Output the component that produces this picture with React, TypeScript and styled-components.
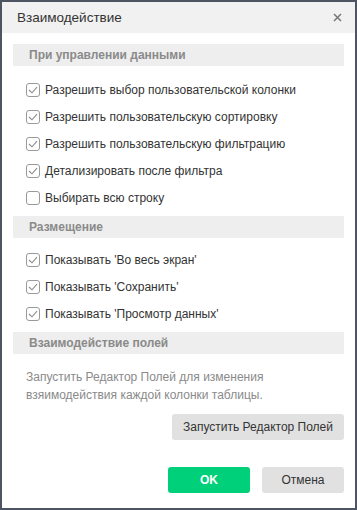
import React from 'react'
import styled, { createGlobalStyle } from 'styled-components'

const GlobalStyle = createGlobalStyle`
  html, body {
    margin: 0;
    padding: 0;
    background: #ffffff;
  }
  * {
    box-sizing: border-box;
  }
`

const Dialog = styled.div`
  width: 357px;
  height: 510px;
  border: 2px solid #4d5563;
  background: #ffffff;
  font-family: 'Liberation Sans', Arial, sans-serif;
  display: flex;
  flex-direction: column;
`

const Header = styled.div`
  height: 31px;
  background: #f1f1f1;
  display: flex;
  align-items: center;
  justify-content: space-between;
  padding: 0 12px 0 15px;
`

const Title = styled.div`
  font-size: 13.5px;
  color: #333333;
`

const CloseButton = styled.button`
  border: none;
  background: transparent;
  padding: 0;
  width: 12px;
  height: 12px;
  display: flex;
  align-items: center;
  justify-content: center;
  cursor: pointer;
`

const Body = styled.div`
  padding: 11px 11px 0 11px;
  display: flex;
  flex-direction: column;
`

const SectionTitle = styled.div<{ $gapBelow: number }>`
  height: 22px;
  background: #eeeeee;
  padding-left: 16px;
  display: flex;
  align-items: center;
  font-size: 12px;
  font-weight: bold;
  color: #8a8a8a;
  margin-bottom: ${({ $gapBelow }) => $gapBelow}px;
`

const OptionList = styled.div`
  display: flex;
  flex-direction: column;
  margin-bottom: 5px;
`

const OptionRow = styled.label`
  height: 27px;
  display: flex;
  align-items: center;
  gap: 5px;
  padding-left: 13px;
  font-size: 12px;
  color: #333333;
  cursor: pointer;
`

const Box = styled.span`
  width: 14px;
  height: 14px;
  border: 1px solid #9a9a9a;
  border-radius: 3px;
  display: flex;
  align-items: center;
  justify-content: center;
  background: #ffffff;
  flex-shrink: 0;
`

const Description = styled.p`
  margin: 14px 0 0 13px;
  font-size: 12px;
  line-height: 18px;
  color: #8a8a8a;
`

const EditorRow = styled.div`
  display: flex;
  justify-content: flex-end;
  margin-top: 10px;
`

const Footer = styled.div`
  display: flex;
  justify-content: flex-end;
  gap: 12px;
  padding: 0 11px;
  margin-top: 27px;
`

const Button = styled.button<{ $primary?: boolean; $wide?: boolean }>`
  height: 26px;
  min-width: 82px;
  padding: 0 ${({ $wide }) => ($wide ? '11px' : '0')};
  border: none;
  border-radius: 3px;
  background: ${({ $primary }) => ($primary ? '#00d07a' : '#e1e1e1')};
  color: ${({ $primary }) => ($primary ? '#ffffff' : '#333333')};
  font-family: 'Liberation Sans', Arial, sans-serif;
  font-size: 12px;
  font-weight: ${({ $primary }) => ($primary ? 'bold' : 'normal')};
  cursor: pointer;
`

const Check = ({ checked }: { checked: boolean }) => (
  <Box>
    {checked && (
      <svg width="10" height="8" viewBox="0 0 10 8">
        <path d="M1 4 L4 6.8 L9 1.2" fill="none" stroke="#8c8c8c" strokeWidth="1.1" />
      </svg>
    )}
  </Box>
)

const Option = ({ label, checked }: { label: string; checked: boolean }) => (
  <OptionRow>
    <Check checked={checked} />
    {label}
  </OptionRow>
)

const dataOptions = [
  { label: 'Разрешить выбор пользовательской колонки', checked: true },
  { label: 'Разрешить пользовательскую сортировку', checked: true },
  { label: 'Разрешить пользовательскую фильтрацию', checked: true },
  { label: 'Детализировать после фильтра', checked: true },
  { label: 'Выбирать всю строку', checked: false },
]

const placementOptions = [
  { label: "Показывать 'Во весь экран'", checked: true },
  { label: "Показывать 'Сохранить'", checked: true },
  { label: "Показывать 'Просмотр данных'", checked: true },
]

export default function App() {
  return (
    <>
      <GlobalStyle />
      <Dialog>
        <Header>
          <Title>Взаимодействие</Title>
          <CloseButton aria-label="Закрыть">
            <svg width="9" height="9" viewBox="0 0 9 9">
              <path d="M1 1 L8 8 M8 1 L1 8" stroke="#777777" strokeWidth="1.5" />
            </svg>
          </CloseButton>
        </Header>
        <Body>
          <SectionTitle $gapBelow={10}>При управлении данными</SectionTitle>
          <OptionList>
            {dataOptions.map((o) => (
              <Option key={o.label} {...o} />
            ))}
          </OptionList>
          <SectionTitle $gapBelow={8}>Размещение</SectionTitle>
          <OptionList>
            {placementOptions.map((o) => (
              <Option key={o.label} {...o} />
            ))}
          </OptionList>
          <SectionTitle $gapBelow={0}>Взаимодействие полей</SectionTitle>
          <Description>
            Запустить Редактор Полей для изменения
            <br />
            взяимодействия каждой колонки таблицы.
          </Description>
          <EditorRow>
            <Button $wide>Запустить Редактор Полей</Button>
          </EditorRow>
        </Body>
        <Footer>
          <Button $primary>OK</Button>
          <Button>Отмена</Button>
        </Footer>
      </Dialog>
    </>
  )
}
